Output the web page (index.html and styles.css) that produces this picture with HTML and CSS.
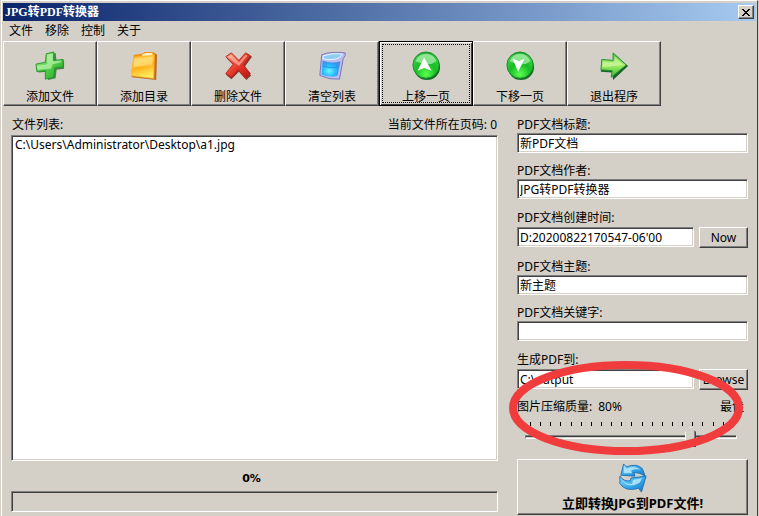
FILE: index.html
```html
<!DOCTYPE html>
<html lang="zh-CN">
<head>
<meta charset="utf-8">
<title>JPG转PDF转换器</title>
<link rel="stylesheet" href="styles.css">
</head>
<body>
<div class="window">
  <header class="titlebar">
    <h1 class="title">JPG转PDF转换器</h1>
    <button class="close" type="button" aria-label="关闭">
      <svg width="8" height="7" viewBox="0 0 8 7" shape-rendering="crispEdges"><path d="M0 0h2v1h1v1h2V1h1V0h2v1H7v1H6v1H5v1h1v1h1v1h1v1H6V6H5V5H3v1H2v1H0V6h1V5h1V4h1V3H2V2H1V1H0z"/></svg>
    </button>
  </header>
  <nav class="menu">
    <button type="button">文件</button>
    <button type="button">移除</button>
    <button type="button">控制</button>
    <button type="button">关于</button>
  </nav>
  <div class="toolbar">
    <button class="tool" type="button">
      <svg class="icon" viewBox="0 0 32 32">
        <defs>
          <linearGradient id="plus" x1="0" y1="0" x2="1" y2="1"><stop offset="0" stop-color="#a5ee91"/><stop offset=".5" stop-color="#55cd47"/><stop offset="1" stop-color="#25a32b"/></linearGradient>
        </defs>
        <path d="M14 4l8-2 1 9 8-1v9l-8 1-1 9-8 2-1-9-9 1 1-9 8-1z" fill="#176e20" opacity=".75"/>
        <path d="M12 3l8-2v9l10-1v8l-9 1-1 10-9 2v-9l-9 1-1-8 10-2z" fill="url(#plus)" stroke="#23982c"/>
        <path d="M13 4l6-1v8l9-1v2l-9 2-2 5-14 1-1-4 11-2z" fill="#d8ffcc" opacity=".55"/>
      </svg>
      <span>添加文件</span>
    </button>
    <button class="tool" type="button">
      <svg class="icon" viewBox="0 0 32 32">
        <defs>
          <linearGradient id="folder" x1="0" y1="0" x2=".3" y2="1"><stop offset="0" stop-color="#ffb52a"/><stop offset=".4" stop-color="#ffc63e"/><stop offset=".6" stop-color="#ffb01c"/><stop offset="1" stop-color="#ffe85a"/></linearGradient>
        </defs>
        <path d="M6 5l9-1 3-2h9l3 2-1 27-26-3z" fill="#b5702a"/>
        <path d="M5 4l9-1 3-2h9l2 2-1 27-25-3z" fill="#ee9417"/>
        <path d="M14 4l4-2h7v3l-11 1z" fill="#fff0c4"/>
        <path d="M5 6l22-2-1 25-24-3z" fill="url(#folder)"/>
        <path d="M6 8l19-2v9L5 17z" fill="#fff0a0" opacity=".5"/>
      </svg>
      <span>添加目录</span>
    </button>
    <button class="tool" type="button">
      <svg class="icon" viewBox="0 0 32 32">
        <defs>
          <linearGradient id="cross" x1="0" y1="0" x2="1" y2="1"><stop offset="0" stop-color="#ff9b80"/><stop offset=".5" stop-color="#e83a2c"/><stop offset="1" stop-color="#b9120e"/></linearGradient>
        </defs>
        <path d="M4 8l6-4 8 8 8-9 5 3-8 11 7 9-5 5-8-9-8 8-6-5 9-9z" fill="#6f1612" opacity=".8"/>
        <path d="M3 6l6-4 8 8 7-8 5 3-7 10 7 9-5 5-8-9-7 8-6-4 8-10z" fill="url(#cross)" stroke="#b52118"/>
        <path d="M5 6l4-2 8 8 7-8 2 1-9 11z" fill="#ffd1bd" opacity=".55"/>
      </svg>
      <span>删除文件</span>
    </button>
    <button class="tool" type="button">
      <svg class="icon" viewBox="0 0 32 32">
        <defs>
          <radialGradient id="bin" cx=".4" cy=".65" r=".6"><stop offset="0" stop-color="#6df6ff"/><stop offset=".6" stop-color="#27b8fa"/><stop offset="1" stop-color="#3f8eea"/></radialGradient>
        </defs>
        <path d="M5 4Q15 0 30 2q1 3-2 6l-4 22Q13 31 3 26z" fill="#bcbcf0" stroke="#7671b8"/>
        <path d="M6 10q9 4 19 1l-3 15q-9 3-17-1z" fill="url(#bin)"/>
        <path d="M7 5q9-3 20-2-2 5-9 6Q10 10 6 8z" fill="#8ccdf8" stroke="#eef6ff"/>
        <path d="M6 16q8 3 16 1" fill="none" stroke="#1f8ee6"/>
      </svg>
      <span>清空列表</span>
    </button>
    <button class="tool tool-current" type="button">
      <svg class="icon" viewBox="0 0 32 32">
        <defs>
          <radialGradient id="ball" cx=".5" cy=".85" r=".9"><stop offset="0" stop-color="#5cff4e"/><stop offset=".45" stop-color="#16bd25"/><stop offset=".8" stop-color="#3fc949"/><stop offset="1" stop-color="#0b8a1c"/></radialGradient>
        </defs>
        <circle cx="17" cy="17" r="14" fill="#176c25"/>
        <circle cx="16" cy="15" r="14" fill="url(#ball)" stroke="#18942a"/>
        <path d="M5 11Q8 3 16 3t11 8q-5 4-11 3T5 11z" fill="#d5ffd2" opacity=".55"/>
        <path d="M14 7l8 14-8-3-7 3z" fill="#fff"/>
      </svg>
      <span>上移一页</span>
    </button>
    <button class="tool" type="button">
      <svg class="icon" viewBox="0 0 32 32">
        <circle cx="17" cy="17" r="14" fill="#176c25"/>
        <circle cx="16" cy="15" r="14" fill="url(#ball)" stroke="#18942a"/>
        <path d="M5 11Q8 3 16 3t11 8q-5 4-11 3T5 11z" fill="#d5ffd2" opacity=".55"/>
        <path d="M8 8l7 3 6-3-7 14z" fill="#fff"/>
      </svg>
      <span>下移一页</span>
    </button>
    <button class="tool" type="button">
      <svg class="icon" viewBox="0 0 32 32">
        <defs>
          <linearGradient id="exit" x1="0" y1="0" x2="0" y2="1"><stop offset="0" stop-color="#56c244"/><stop offset=".5" stop-color="#a8ee68"/><stop offset="1" stop-color="#35b432"/></linearGradient>
        </defs>
        <path d="M3 10l12 1 1-8 15 13-16 15-1-8-12-1z" fill="#16682a"/>
        <path d="M3 9l12 1V2l14 13-16 13 1-7-12-1z" fill="url(#exit)" stroke="#259334"/>
        <path d="M4 11l12 1 1-6 9 9-22 2z" fill="#e0ffc0" opacity=".5"/>
      </svg>
      <span>退出程序</span>
    </button>
  </div>
  <main class="content">
    <section class="files">
      <div class="files-head"><span>文件列表:</span><span>当前文件所在页码: 0</span></div>
      <ul class="file-list"><li>C:\Users\Administrator\Desktop\a1.jpg</li></ul>
      <div class="percent">0%</div>
      <div class="progress" role="progressbar" aria-valuenow="0" aria-valuemin="0" aria-valuemax="100"></div>
    </section>
    <form class="options">
      <div class="field"><label for="doc-title">PDF文档标题:</label><input class="text" id="doc-title" type="text" value="新PDF文档"></div>
      <div class="field"><label for="author">PDF文档作者:</label><input class="text" id="author" type="text" value="JPG转PDF转换器"></div>
      <div class="field field-action"><label for="created">PDF文档创建时间:</label>
        <div class="row"><input class="text" id="created" type="text" value="D:20200822170547-06'00"><button class="small" type="button">Now</button></div>
      </div>
      <div class="field"><label for="subject">PDF文档主题:</label><input class="text" id="subject" type="text" value="新主题"></div>
      <div class="field"><label for="keywords">PDF文档关键字:</label><input class="text" id="keywords" type="text"></div>
      <div class="field field-action"><label for="output">生成PDF到:</label>
        <div class="row"><input class="text" id="output" type="text" value="C:\output"><button class="small" type="button">Browse</button></div>
      </div>
      <div class="quality">
        <div class="quality-head"><label for="quality">图片压缩质量:</label><output for="quality">80%</output><span class="best">最佳</span></div>
        <div class="ticks"><i></i><i></i><i></i><i></i><i></i><i></i><i></i><i></i><i></i><i></i><i></i><i></i><i></i><i></i><i></i><i></i><i></i><i></i><i></i><i></i><i></i></div>
        <input class="slider" id="quality" type="range" min="0" max="100" value="80">
        <svg class="highlight" viewBox="0 0 234 94" preserveAspectRatio="none"><ellipse cx="117" cy="47" rx="113" ry="43"/></svg>
      </div>
      <button class="convert" type="button">
        <svg class="icon" viewBox="0 0 32 32">
          <defs>
            <linearGradient id="sync" x1="0" y1="0" x2="1" y2="1"><stop offset="0" stop-color="#8edcff"/><stop offset=".5" stop-color="#38a8ec"/><stop offset="1" stop-color="#1474c4"/></linearGradient>
          </defs>
          <path d="M6 1l3 3q11-4 17 2l3 8q-6-4-12-4l1 4-15-1z" fill="url(#sync)" stroke="#1c72b4"/>
          <path d="M2 14q4 6 11 5l1-3 16-2-5 17-3-4Q8 31 2 22z" fill="url(#sync)" stroke="#1c72b4"/>
          <path d="M7 3l2 3q9-4 15 1-7-1-10 1l1 3-9 0zM4 18q5 5 11 4l1-4 10-2-3 5q-12 7-19-3z" fill="#d5f5ff" opacity=".7"/>
        </svg>
        <span>立即转换JPG到PDF文件!</span>
      </button>
    </form>
  </main>
</div>
</body>
</html>
```
FILE: styles.css
```css
:root {
  --face: #d4d0c8;
  --light: #fff;
  --shadow: #808080;
  --dark: #404040;
}

* { box-sizing: border-box; }

body {
  margin: 0;
  background: var(--face);
  color: #000;
  font: 12px/16px "Noto Sans", "Noto Sans CJK SC", sans-serif;
}

button, input { font: inherit; color: inherit; }

button {
  background: var(--face);
  border: 1px solid;
  border-color: var(--light) var(--dark) var(--dark) var(--light);
  box-shadow: inset -1px -1px var(--shadow);
  padding: 0;
}

.window {
  display: flex;
  flex-direction: column;
  min-height: 100vh;
  margin: 0 1px;
  padding: 2px 1px 0;
  border: 1px solid;
  border-color: var(--light) var(--dark) transparent var(--light);
}

.titlebar {
  display: flex;
  align-items: center;
  justify-content: space-between;
  height: 18px;
  padding: 0 2px;
  background: linear-gradient(to right, #0a246a, #a6caf0);
}

.title {
  margin: 0;
  color: #fff;
  font: bold 12px/16px "Liberation Serif", "Noto Sans CJK SC", serif;
}

.close {
  display: flex;
  align-items: center;
  justify-content: center;
  width: 16px;
  height: 14px;
}

.menu {
  display: flex;
  gap: 12px;
  height: 20px;
  padding: 2px 6px;
}

.menu button {
  border: 0;
  box-shadow: none;
}

.toolbar { display: flex; }

.tool {
  display: flex;
  flex-direction: column;
  align-items: center;
  gap: 8px;
  width: 94px;
  height: 65px;
  padding-top: 9px;
}

.tool-current {
  border-color: #000;
  box-shadow: inset 1px 1px var(--light), inset -1px -1px var(--dark);
  outline: 1px dotted #000;
  outline-offset: -4px;
}

.icon {
  display: block;
  flex: none;
  width: 30px;
  height: 30px;
}

.content {
  display: grid;
  grid-template-columns: 1fr 231px;
  gap: 19px;
  flex: 1;
  padding: 11px 8px 1px;
}

.files {
  display: flex;
  flex-direction: column;
  min-width: 0;
  padding-bottom: 3px;
}

.files-head {
  display: flex;
  justify-content: space-between;
  margin-bottom: 2px;
  padding: 0 1px;
}

.file-list, .text, .progress {
  border: 1px solid;
  border-color: var(--shadow) var(--light) var(--light) var(--shadow);
  box-shadow: inset 1px 1px var(--dark), inset -1px -1px var(--face);
}

.file-list {
  flex: 1;
  margin: 0;
  padding: 1px 3px;
  background: #fff;
  list-style: none;
}

.percent {
  margin: 10px 0 4px;
  padding-right: 6px;
  font: bold 11px/16px "DejaVu Sans", sans-serif;
  text-align: center;
}

.progress { height: 21px; }

.options {
  display: flex;
  flex-direction: column;
  gap: 10px;
}

.field { display: flex; flex-direction: column; }
.field-action label { line-height: 18px; }

.text {
  width: 100%;
  min-width: 0;
  height: 20px;
  padding: 0 2px;
  background: #fff;
  border-radius: 0;
}

.row {
  display: flex;
  align-items: flex-start;
  gap: 5px;
  height: 22px;
}

.row .text { flex: 1; }

.small {
  width: 49px;
  height: 21px;
}

.quality {
  position: relative;
  margin-top: -2px;
}

.quality-head {
  display: flex;
  gap: 6px;
  padding-right: 4px;
}

.best { margin-left: auto; }

.ticks {
  display: flex;
  justify-content: space-between;
  margin: 7px 14px 0 13px;
}

.ticks i {
  width: 1px;
  height: 4px;
  background: #000;
}

.slider {
  -webkit-appearance: none;
  appearance: none;
  display: block;
  width: calc(100% - 19px);
  height: 20px;
  margin: 1px 11px 0 8px;
  background: none;
}

.slider::-webkit-slider-runnable-track {
  height: 4px;
  border: 1px solid;
  border-color: var(--shadow) var(--light) var(--light) var(--shadow);
  background: linear-gradient(var(--dark) 50%, var(--face) 50%);
}

.slider::-webkit-slider-thumb {
  -webkit-appearance: none;
  appearance: none;
  width: 11px;
  height: 20px;
  margin-top: -9px;
  border: 1px solid;
  border-color: var(--light) var(--dark) var(--dark) var(--light);
  background: var(--face);
  box-shadow: inset -1px -1px var(--shadow);
  clip-path: polygon(50% 0, 100% 25%, 100% 100%, 0 100%, 0 25%);
}

.highlight {
  position: absolute;
  top: -38px;
  left: -8px;
  width: 234px;
  height: 94px;
  pointer-events: none;
}

.highlight ellipse {
  fill: none;
  stroke: #f03c3c;
  stroke-width: 8;
}

.convert {
  display: flex;
  flex-direction: column;
  align-items: center;
  height: 56px;
  padding-top: 3px;
  gap: 2px;
  margin-top: 2px;
  font-size: 13px;
  font-weight: bold;
}
```
